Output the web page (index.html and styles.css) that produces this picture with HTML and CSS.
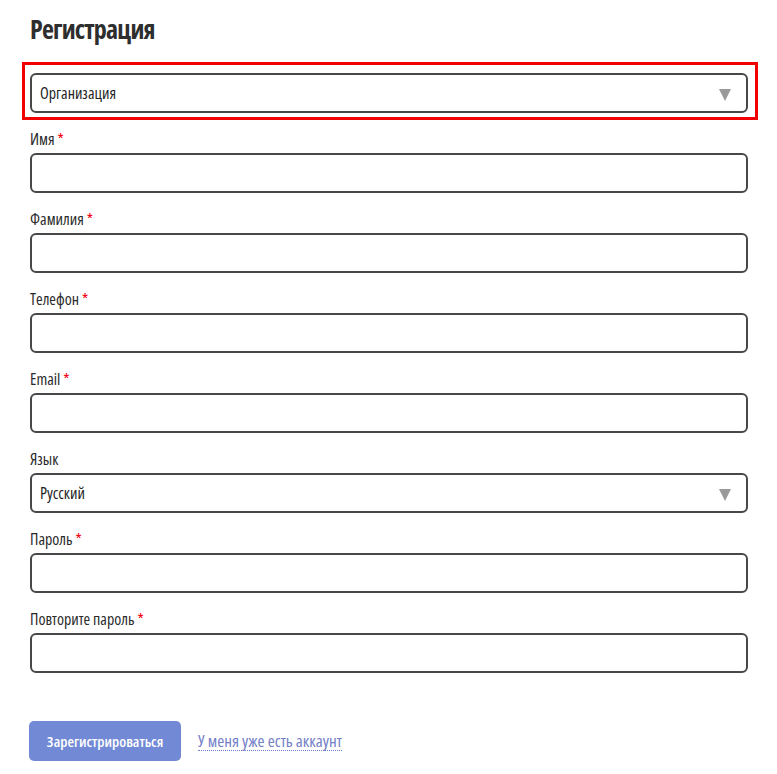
FILE: index.html
```html
<!DOCTYPE html>
<html lang="ru">
<head>
<meta charset="utf-8">
<title>Регистрация</title>
<link rel="stylesheet" href="styles.css">
</head>
<body>
<div class="page">
  <h1 class="title">Регистрация</h1>
  <form class="form">
    <div class="highlight">
      <div class="select-wrap">
        <select class="control select">
          <option>Организация</option>
        </select>
      </div>
    </div>

    <div class="field">
      <label class="label">Имя <span class="req">*</span></label>
      <input class="control" type="text">
    </div>
    <div class="field">
      <label class="label">Фамилия <span class="req">*</span></label>
      <input class="control" type="text">
    </div>
    <div class="field">
      <label class="label">Телефон <span class="req">*</span></label>
      <input class="control" type="text">
    </div>
    <div class="field">
      <label class="label">Email <span class="req">*</span></label>
      <input class="control" type="text">
    </div>
    <div class="field">
      <label class="label">Язык</label>
      <div class="select-wrap">
        <select class="control select">
          <option>Русский</option>
        </select>
      </div>
    </div>
    <div class="field">
      <label class="label">Пароль <span class="req">*</span></label>
      <input class="control" type="password">
    </div>
    <div class="field">
      <label class="label">Повторите пароль <span class="req">*</span></label>
      <input class="control" type="password">
    </div>

    <div class="actions">
      <button class="btn" type="button">Зарегистрироваться</button>
      <a class="link" href="#">У меня уже есть аккаунт</a>
    </div>
  </form>
</div>
</body>
</html>
```

FILE: styles.css
```css
html, body {
  margin: 0;
  padding: 0;
  background: #ffffff;
}

body {
  font-family: "Open Sans", "DejaVu Sans Condensed", sans-serif;
  font-stretch: 75%;
  color: #2b2b2b;
}

.page {
  padding: 0 29px 0 30px;
}

.title {
  margin: 0;
  padding-top: 13px;
  height: 62px;
  box-sizing: border-box;
  font-size: 26px;
  line-height: 32px;
  font-weight: 700;
  letter-spacing: -0.8px;
  color: #2e2e2e;
}

.form {
  display: flex;
  flex-direction: column;
}

.highlight {
  border: 3px solid #f20000;
  margin: 0 -10px 9px -8px;
  padding: 8px 7px 4px 5px;
}

.field {
  display: flex;
  flex-direction: column;
  margin-bottom: 16px;
}

.label {
  font-size: 16px;
  line-height: 20px;
  height: 20px;
  margin-bottom: 4px;
  font-weight: 500;
  color: #2b2b2b;
}

.req {
  color: #f00010;
}

.control {
  box-sizing: border-box;
  width: 100%;
  height: 40px;
  margin: 0;
  border: 2px solid #484848;
  border-radius: 6px;
  background: #ffffff;
  padding: 0 8px;
  font-family: inherit;
  font-stretch: 75%;
  font-size: 16px;
  font-weight: 500;
  color: #1f1f1f;
  outline: none;
}

.select-wrap {
  position: relative;
}

.select {
  appearance: none;
  -webkit-appearance: none;
}

.select-wrap::after {
  content: "";
  position: absolute;
  right: 17px;
  top: 16px;
  width: 0;
  height: 0;
  border-left: 6.5px solid transparent;
  border-right: 6.5px solid transparent;
  border-top: 12px solid #9a9a9a;
  pointer-events: none;
}

.actions {
  display: flex;
  align-items: center;
  gap: 17px;
  margin-top: 32px;
  margin-left: -1px;
}

.btn {
  width: 152px;
  height: 40px;
  border: none;
  border-radius: 5px;
  background: #7289d5;
  color: #ffffff;
  font-family: inherit;
  font-stretch: 75%;
  font-weight: 600;
  font-size: 15px;
  padding: 0;
}

.link {
  color: #7480c8;
  font-size: 17px;
  font-weight: 500;
  text-decoration: none;
  border-bottom: 1px dotted #6f7ed0;
  line-height: 18px;
}
```
